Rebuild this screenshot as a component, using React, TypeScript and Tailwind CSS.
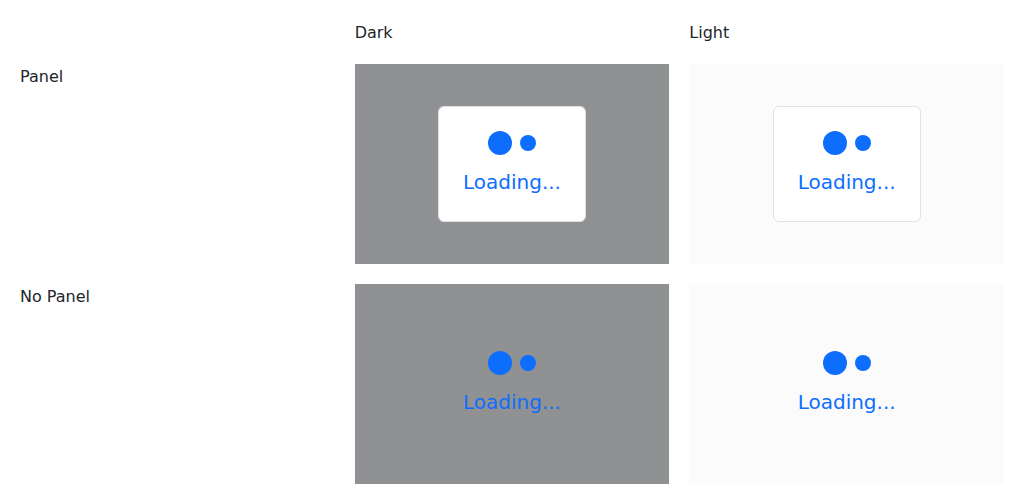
import React from "react";

type Theme = "dark" | "light";

const overlayClasses: Record<Theme, string> = {
  dark: "bg-[#909192]",
  light: "bg-[#fbfbfb]",
};

function Label({ children }: { children: React.ReactNode }) {
  return <div className="h-6 text-base leading-[26px]">{children}</div>;
}

function Loader({ panel }: { panel: boolean }) {
  return (
    <div
      role="status"
      className={
        panel
          ? "rounded-md border border-[#dee2e6] bg-white p-6 text-[#0d6efd]"
          : "border border-transparent p-6 text-[#0d6efd]"
      }
    >
      <div className="mb-3 flex items-center justify-center gap-2">
        <span className="size-6 rounded-full bg-current" />
        <span className="size-4 rounded-full bg-current" />
      </div>
      <p className="text-xl leading-[30px]">Loading...</p>
    </div>
  );
}

function Cell({ theme, panel }: { theme: Theme; panel: boolean }) {
  return (
    <div className={`flex h-[200px] items-center justify-center ${overlayClasses[theme]}`}>
      <Loader panel={panel} />
    </div>
  );
}

export default function App() {
  return (
    <main className="grid grid-cols-3 gap-5 bg-white p-5 font-['DejaVu_Sans',sans-serif] text-[#212529]">
      <div />
      <Label>Dark</Label>
      <Label>Light</Label>
      <Label>Panel</Label>
      <Cell theme="dark" panel />
      <Cell theme="light" panel />
      <Label>No Panel</Label>
      <Cell theme="dark" panel={false} />
      <Cell theme="light" panel={false} />
    </main>
  );
}
